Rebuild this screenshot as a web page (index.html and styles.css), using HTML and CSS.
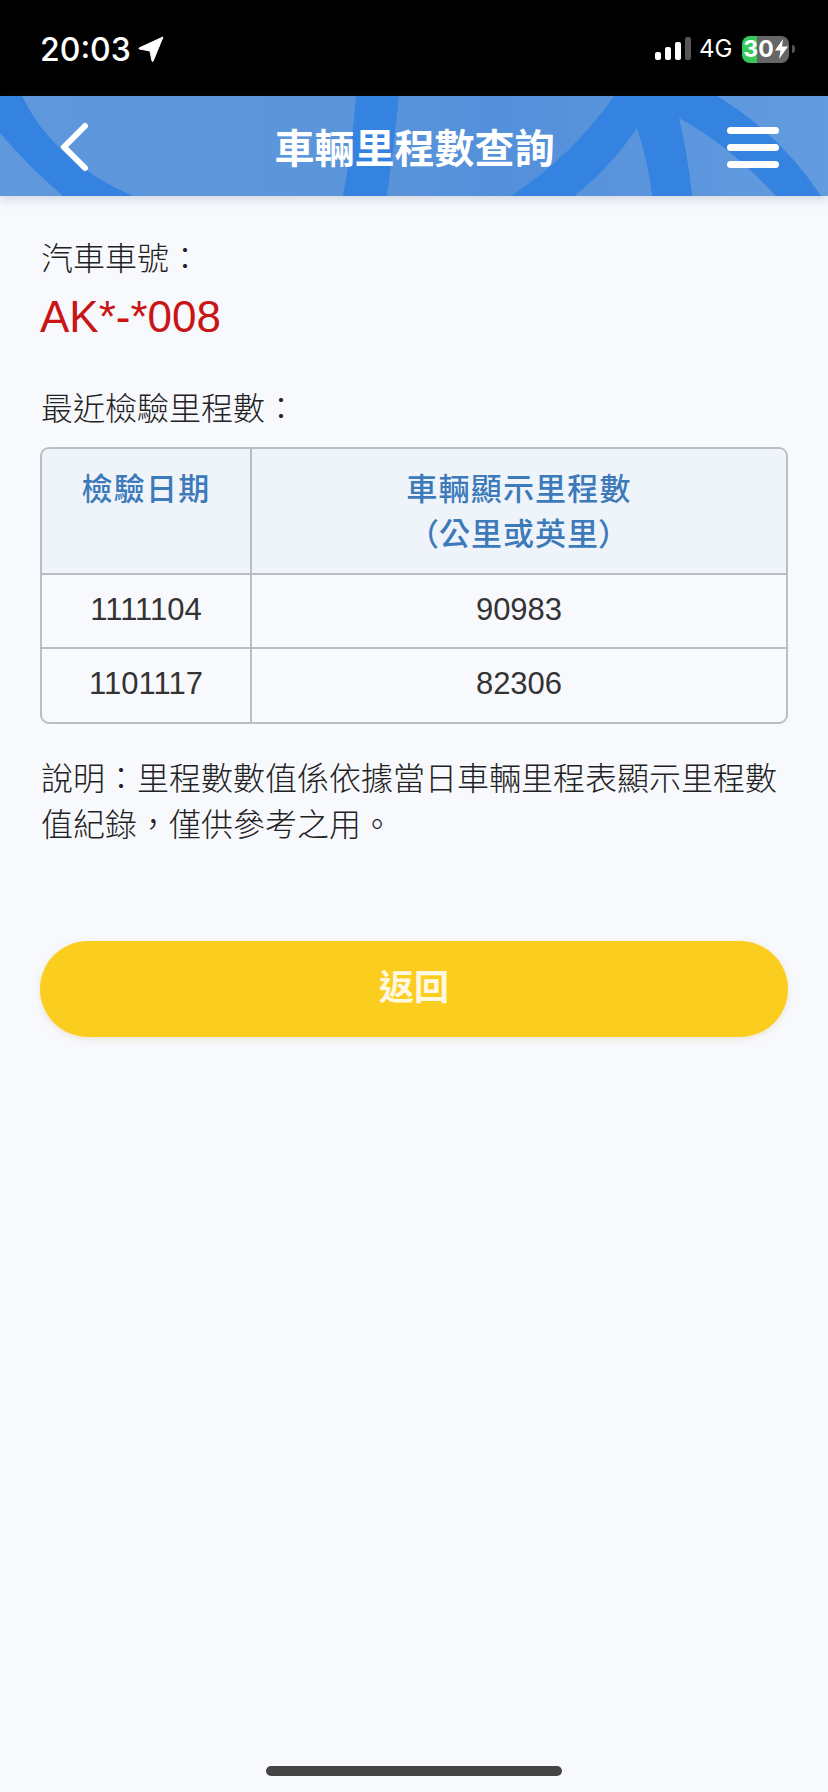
FILE: index.html
```html
<!DOCTYPE html>
<html lang="zh-Hant">
<head>
<meta charset="utf-8">
<title>車輛里程數查詢</title>
<link rel="stylesheet" href="styles.css">
</head>
<body>
<div class="screen">
  <div class="status">
    <div class="status-left">
      <span class="time">20:03</span>
      <svg class="loc" width="26" height="26" viewBox="0 0 26 26"><path d="M25 1 L1 12 Q0.500 12.800 1.500 13 L12 15 L14 25 Q14.500 26 15.200 25 Z" fill="#fff" stroke="#fff" stroke-width="1" stroke-linejoin="round"/></svg>
    </div>
    <div class="status-right">
      <div class="signal"><i class="b1"></i><i class="b2"></i><i class="b3"></i><i class="b4"></i></div>
      <span class="net">4G</span>
      <div class="battery"><span>30</span><svg width="13" height="20" viewBox="0 0 13 20"><path d="M8 0 L0 11.500 H5.500 L4 20 L13 7.500 H7 Z" fill="#fff"/></svg></div>
      <i class="cap"></i>
    </div>
  </div>

  <header class="bar">
    <svg class="bar-art" width="828" height="100" viewBox="0 0 828 100" aria-hidden="true">
      <path d="M0 0 H22 Q54 66 133 100 H63 Q28 70 0 37 Z"/>
      <path d="M356 0 H399 Q394 50 387 100 H343 Q352 50 356 0 Z"/>
      <path d="M614 0 H717 Q780 38 821 100 H776 Q730 50 679 22 Q688 60 692 100 H652 Q648 65 637 32 Q610 72 574 100 H511 Q572 60 614 0 Z"/>
    </svg>
    <button class="back" aria-label="返回"><svg width="30" height="50" viewBox="0 0 30 50"><path d="M25 4 L4 25 L25 46" fill="none" stroke="#fff" stroke-width="6" stroke-linecap="round" stroke-linejoin="round"/></svg></button>
    <h1 class="title">車輛里程數查詢</h1>
    <div class="menu"><i></i><i></i><i></i></div>
  </header>

  <main class="content">
    <p class="label">汽車車號：</p>
    <p class="plate">AK*-*008</p>
    <p class="label second">最近檢驗里程數：</p>
    <div class="table-wrap">
      <table class="records">
        <thead>
          <tr><th class="col-date">檢驗日期</th><th>車輛顯示里程數<br><span class="unit">（公里或英里）</span></th></tr>
        </thead>
        <tbody>
          <tr><td>1111104</td><td>90983</td></tr>
          <tr><td>1101117</td><td>82306</td></tr>
        </tbody>
      </table>
    </div>
    <p class="note">說明：里程數數值係依據當日車輛里程表顯示里程數值紀錄，僅供參考之用。</p>
    <button class="return">返回</button>
  </main>

  <div class="home"></div>
</div>
</body>
</html>
```
FILE: styles.css
```css
* { box-sizing: border-box; }
html, body { margin: 0; padding: 0; }
body {
  width: 828px;
  height: 1792px;
  overflow: hidden;
  background: #f8f9fd;
  font-family: "Liberation Sans", "Noto Sans CJK TC", sans-serif;
  color: #2e2e2e;
}
.screen {
  width: 828px;
  height: 1792px;
  display: flex;
  flex-direction: column;
}
.status {
  height: 96px;
  flex: none;
  background: #000;
  color: #fff;
  display: flex;
  justify-content: space-between;
  align-items: flex-start;
  padding: 33px 33px 0 40px;
}
.status-left { display: flex; align-items: center; gap: 7px; }
.time {
  font: 500 32px/34px Inter, sans-serif;
}
.loc { display: block; margin-top: -2px; }
.status-right { display: flex; align-items: center; padding-top: 2px; }
.signal { display: flex; align-items: flex-end; gap: 4px; height: 22px; }
.signal i { display: block; width: 6px; background: #fff; border-radius: 2px; }
.signal .b1 { height: 8px; }
.signal .b2 { height: 13px; }
.signal .b3 { height: 18px; }
.signal .b4 { height: 23px; background: #555; }
.net {
  font: 400 24px/28px Inter, sans-serif;
  margin-left: 8px;
  width: 43px;
}
.battery {
  width: 47px;
  height: 27px;
  border-radius: 8px;
  background: linear-gradient(90deg, #36c95c 0, #36c95c 31%, #666 31%, #666 100%);
  display: flex;
  align-items: center;
  justify-content: center;
  gap: 1px;
  font: 700 23px/27px Inter, sans-serif;
  color: #fff;
}
.cap {
  display: block;
  width: 3px;
  height: 8px;
  margin-left: 3px;
  background: #555;
  border-radius: 0 3px 3px 0;
}
.bar {
  position: relative;
  height: 100px;
  flex: none;
  background: linear-gradient(90deg, #5f98dc 0, #5a94da 45%, #5390da 60%, #639bdf 100%);
  box-shadow: 0 4px 9px rgba(120, 135, 160, .28);
  display: grid;
  grid-template-columns: 1fr auto 1fr;
  align-items: center;
  padding: 0 49px 0 60px;
  overflow: visible;
}
.bar-art { position: absolute; left: 0; top: 0; fill: #3583e0; }
.back {
  position: relative;
  justify-self: start;
  padding: 0;
  border: 0;
  background: none;
  display: block;
  line-height: 0;
  margin-top: 2px;
}
.title {
  position: relative;
  margin: 0 0 0 -10px;
  font: 700 40px/50px "Noto Sans CJK TC", sans-serif;
  letter-spacing: 0;
  color: #fff;
}
.menu {
  position: relative;
  justify-self: end;
  display: flex;
  flex-direction: column;
  gap: 10px;
  width: 52px;
  margin-top: 2px;
}
.menu i {
  display: block;
  height: 7px;
  border-radius: 4px;
  background: #fff;
}
.content {
  padding: 37px 40px 0 40px;
  font-family: "Noto Sans CJK TC", "Liberation Sans", sans-serif;
}
.label {
  margin: 0;
  padding-left: 1px;
  font-size: 32px;
  line-height: 46px;
  font-weight: 300;
  letter-spacing: 0;
  color: #222;
}
.plate {
  margin: 8px 0 0;
  font: 400 44px/60px "Liberation Sans", sans-serif;
  color: #c81616;
}
.second { margin-top: 36px; }
.table-wrap {
  margin: 18px 0 0;
  border: 2px solid #b9bdc6;
  border-radius: 9px;
  overflow: hidden;
}
.records {
  width: 100%;
  border-collapse: collapse;
  table-layout: fixed;
}
.records th {
  height: 125px;
  padding: 15px 0 0;
  vertical-align: top;
  background: #eff4fb;
  font: 500 31px/45px "Noto Sans CJK TC", sans-serif;
  letter-spacing: 1.200px;
  color: #3d7ab9;
}
.unit { font-feature-settings: "palt"; letter-spacing: 1px; }
.records td {
  height: 74px;
  padding: 0 0 3px;
  text-align: center;
  font: 400 31px/40px "Liberation Sans", sans-serif;
  color: #333;
}
.records .col-date { width: 209px; }
.records th + th, .records td + td { border-left: 2px solid #b9bdc6; }
.records tbody tr { border-top: 2px solid #b9bdc6; }
.note {
  margin: 29px 0 0 1px;
  font-size: 32px;
  line-height: 46px;
  font-weight: 300;
  color: #222;
}
.return {
  display: block;
  width: 100%;
  height: 96px;
  margin-top: 96px;
  padding: 0 0 9px;
  border: 0;
  border-radius: 48px;
  background: #fbcd1f;
  box-shadow: 0 2px 6px rgba(190, 170, 90, .25);
  font: 700 35px/44px "Noto Sans CJK TC", sans-serif;
  letter-spacing: 0;
  color: #fff8e2;
}
.home {
  width: 296px;
  height: 10px;
  margin: auto auto 16px;
  border-radius: 5px;
  background: #444;
}
```
